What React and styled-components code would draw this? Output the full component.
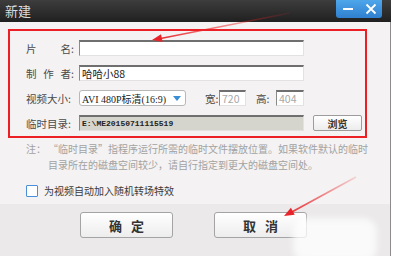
import React from 'react';
import styled, { createGlobalStyle } from 'styled-components';

const Global = createGlobalStyle`
  html, body { margin: 0; padding: 0; background: #fff; }
  body { font-family: "Noto Sans CJK SC", "Noto Sans", sans-serif; }
`;

const Page = styled.div`
  position: relative;
  width: 400px;
  height: 256px;
  overflow: hidden;
  background: #fff;
`;

const Window = styled.div`
  width: 391px;
  height: 256px;
  display: flex;
  flex-direction: column;
`;

const TitleBar = styled.div`
  height: 22px;
  flex: none;
  display: flex;
  justify-content: space-between;
  background: linear-gradient(#3d3d3d, #202020);
`;

const Title = styled.div`
  padding-left: 5px;
  font-size: 13px;
  line-height: 22px;
  color: #dcdcdc;
`;

const Controls = styled.div`
  width: 46px;
  height: 18px;
  margin-right: 9px;
  display: flex;
  align-items: center;
  justify-content: space-around;
  border-radius: 0 0 3px 3px;
  background: linear-gradient(#4ea6ea, #2f80cf);
`;

const Body = styled.div`
  height: 182px;
  flex: none;
  box-sizing: border-box;
  padding: 7px 0 0 8px;
  background: #f4f2f2;
  border-right: 1px solid #8c8c8c;
`;

const RedBox = styled.div`
  width: 359px;
  box-sizing: border-box;
  border: 2px solid #ec1f26;
  padding: 9px 0 5px 16px;
  display: flex;
  flex-direction: column;
  gap: 9px;
`;

const Row = styled.div`
  height: 16px;
  display: flex;
  align-items: center;
`;

const Label = styled.div`
  width: 48px;
  margin-right: 5px;
  display: flex;
  justify-content: space-between;
  font-size: 10.5px;
  color: #4a4a4a;
  white-space: nowrap;
`;

const SmallLabel = styled.div`
  margin-left: ${p => p.$ml}px;
  width: ${p => p.$w}px;
  font-size: 10.5px;
  color: #4a4a4a;
  white-space: nowrap;
`;

const Field = styled.div`
  width: ${p => p.$w}px;
  height: 16px;
  box-sizing: border-box;
  border-style: solid;
  border-width: 2px 1px 1px 1px;
  border-color: #6f6f6f #e2e2e2 #e2e2e2 #8a8a8a;
  background: ${p => (p.$disabled ? '#d5d5ce' : '#fff')};
  padding-left: 2px;
  font-size: ${p => (p.$mono ? '8px' : '10.5px')};
  font-family: ${p => (p.$mono ? '"Liberation Mono", monospace' : 'inherit')};
  font-weight: ${p => (p.$mono ? 'bold' : 'normal')};
  line-height: 13px;
  color: ${p => (p.$muted ? '#a8a8a8' : '#222')};
  white-space: nowrap;
  overflow: hidden;
`;

const Select = styled.div`
  width: 107px;
  height: 16px;
  box-sizing: border-box;
  border: 1px solid #b8b8b8;
  border-radius: 3px;
  background: #fff;
  padding: 0 4px 0 2px;
  display: flex;
  align-items: center;
  justify-content: space-between;
  font-size: 10px;
  font-family: "Liberation Serif", "Noto Sans CJK SC", serif;
  color: #222;
  white-space: nowrap;
`;

const Caret = styled.span`
  width: 0;
  height: 0;
  border-left: 4px solid transparent;
  border-right: 4px solid transparent;
  border-top: 5px solid #3b8ed6;
`;

const Browse = styled.div`
  margin-left: 9px;
  width: 49px;
  height: 16px;
  box-sizing: border-box;
  border: 1px solid #9c9c9c;
  border-radius: 2px;
  background: linear-gradient(#ffffff, #ececec);
  display: flex;
  align-items: center;
  justify-content: center;
  font-size: 10px;
  font-weight: bold;
  color: #333;
`;

const Note = styled.div`
  margin-top: 3px;
  padding-left: 18px;
  display: flex;
  font-size: 10px;
  line-height: 16px;
  color: #a2a2a2;
  white-space: nowrap;
`;

const NotePrefix = styled.div`
  width: 22px;
  flex: none;
`;

const CheckRow = styled.div`
  margin: 10px 0 0 18px;
  display: flex;
  align-items: center;
  gap: 6px;
`;

const CheckBox = styled.div`
  width: 12px;
  height: 12px;
  box-sizing: border-box;
  border: 1px solid #4a90d9;
  border-radius: 1px;
  background: #fff;
`;

const CheckText = styled.div`
  font-size: 10px;
  color: #3a3a3a;
`;

const Footer = styled.div`
  flex: 1;
  box-sizing: border-box;
  padding: 8px 0 0 80px;
  display: flex;
  gap: 41px;
  background: #ebe9e9;
  border-right: 1px solid #8c8c8c;
`;

const Button = styled.div`
  width: 93px;
  height: 26px;
  box-sizing: border-box;
  border: 1px solid #a4a4a4;
  border-radius: 3px;
  background: linear-gradient(#ffffff, #ededed);
  display: flex;
  align-items: center;
  justify-content: center;
  padding-left: 9px;
  font-size: 13px;
  font-weight: bold;
  letter-spacing: 9px;
  color: #333;
`;

const Overlay = styled.svg`
  position: absolute;
  left: 0;
  top: 0;
  pointer-events: none;
`;

const Smudge = styled.div`
  position: absolute;
  left: 293px;
  top: 218px;
  width: 84px;
  height: 44px;
  border-radius: 14px;
  background: rgba(255, 255, 255, 0.75);
  filter: blur(3px);
`;

export default function App() {
  return (
    <Page>
      <Global />
      <Window>
        <TitleBar>
          <Title>新建</Title>
          <Controls>
            <svg width="12" height="12" viewBox="0 0 12 12">
              <line x1="1" y1="6" x2="11" y2="6" stroke="#fff" strokeWidth="2" />
            </svg>
            <svg width="12" height="12" viewBox="0 0 12 12">
              <path d="M1.5 1.5 L10.5 10.5 M10.5 1.5 L1.5 10.5" stroke="#fff" strokeWidth="1.8" />
            </svg>
          </Controls>
        </TitleBar>
        <Body>
          <RedBox>
            <Row>
              <Label><span>片</span><span>名:</span></Label>
              <Field $w={225} />
            </Row>
            <Row>
              <Label><span>制</span><span>作</span><span>者:</span></Label>
              <Field $w={225}>哈哈小88</Field>
            </Row>
            <Row>
              <Label><span>视频大小:</span></Label>
              <Select>
                <span>AVI 480P标清(16:9)</span>
                <Caret />
              </Select>
              <SmallLabel $ml={19} $w={14}>宽:</SmallLabel>
              <Field $w={27} $muted>720</Field>
              <SmallLabel $ml={10} $w={20}>高:</SmallLabel>
              <Field $w={28} $muted>404</Field>
            </Row>
            <Row>
              <Label><span>临时目录:</span></Label>
              <Field $w={225} $disabled $mono>E:\ME20150711115519</Field>
              <Browse>浏览</Browse>
            </Row>
          </RedBox>
          <Note>
            <NotePrefix>注：</NotePrefix>
            <div>
              <div>“临时目录”指程序运行所需的临时文件摆放位置。如果软件默认的临时</div>
              <div>目录所在的磁盘空间较少，请自行指定到更大的磁盘空间处。</div>
            </div>
          </Note>
          <CheckRow>
            <CheckBox />
            <CheckText>为视频自动加入随机转场特效</CheckText>
          </CheckRow>
        </Body>
        <Footer>
          <Button>确定</Button>
          <Button>取消</Button>
        </Footer>
      </Window>
      <Smudge />
      <Overlay width="400" height="256" viewBox="0 0 400 256">
        <defs>
          <linearGradient id="fade1" x1="290" y1="13" x2="152" y2="40" gradientUnits="userSpaceOnUse">
            <stop offset="0" stopColor="#e8242a" stopOpacity="0.1" />
            <stop offset="1" stopColor="#e8242a" stopOpacity="1" />
          </linearGradient>
          <linearGradient id="fade2" x1="356" y1="177" x2="284" y2="216" gradientUnits="userSpaceOnUse">
            <stop offset="0" stopColor="#e8242a" stopOpacity="0.15" />
            <stop offset="1" stopColor="#e8242a" stopOpacity="1" />
          </linearGradient>
        </defs>
        <line x1="290" y1="13" x2="158" y2="39" stroke="url(#fade1)" strokeWidth="1.6" />
        <polygon points="152,40 162.6,42 161,34.2" fill="#e8242a" />
        <line x1="356" y1="177" x2="290" y2="213" stroke="url(#fade2)" strokeWidth="1.6" />
        <polygon points="284,216 294.7,214.7 290.9,207.7" fill="#e8242a" />
      </Overlay>
    </Page>
  );
}
